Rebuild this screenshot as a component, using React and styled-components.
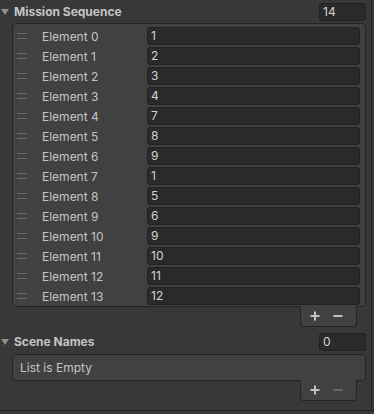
import React from 'react';
import styled, { createGlobalStyle } from 'styled-components';

const GlobalStyle = createGlobalStyle`
    html, body {
        margin: 0;
        padding: 0;
        background: #383838;
        font-family: Inter, "Noto Sans", "Liberation Sans", sans-serif;
        font-size: 12px;
        color: #c4c4c4;
    }
`;

const missionValues = [1, 2, 3, 4, 7, 8, 9, 1, 5, 6, 9, 10, 11, 12];

const Window = styled.div`
    width: 374px;
    height: 414px;
    display: flex;
    flex-direction: column;
    overflow: hidden;
`;

const Body = styled.div`
    display: flex;
    height: 410px;
    border-bottom: 1px solid #232323;
`;

const Inspector = styled.div`
    width: 371px;
    display: flex;
    flex-direction: column;
    padding-right: 5px;
    box-sizing: border-box;
`;

const ScrollStrip = styled.div`
    width: 2px;
    border-left: 1px solid #232323;
    background: #383838;
`;

const Header = styled.div`
    height: 23px;
    display: flex;
    align-items: center;
    margin-top: ${p => p.$top || 0}px;
`;

const Arrow = styled.span`
    width: 0;
    height: 0;
    margin-left: 1px;
    border-left: 4px solid transparent;
    border-right: 4px solid transparent;
    border-top: 6px solid #8f8f8f;
`;

const Title = styled.span`
    margin-left: 5px;
    font-weight: 700;
    font-size: 12px;
    color: #c4c4c4;
    flex: 1;
`;

const SizeField = styled.div`
    width: 47px;
    height: 18px;
    box-sizing: border-box;
    background: #2a2a2a;
    border: 1px solid #212121;
    border-radius: 3px;
    padding-left: 3px;
    line-height: 16px;
    color: #d2d2d2;
`;

const ListBox = styled.div`
    margin-left: 12px;
    margin-top: ${p => p.$top || 0}px;
    background: #414141;
    border: 1px solid #242424;
    border-radius: 4px;
    padding: 2px 0 0;
    box-sizing: border-box;
    min-height: ${p => p.$minHeight || 0}px;
`;

const Row = styled.div`
    height: 20px;
    display: flex;
    align-items: center;
`;

const Handle = styled.span`
    width: 10px;
    height: 4px;
    margin-left: 4px;
    border-top: 1px solid #6a6a6a;
    border-bottom: 1px solid #6a6a6a;
`;

const Label = styled.span`
    width: 105px;
    margin-left: 15px;
    color: #c4c4c4;
`;

const Field = styled.div`
    width: 213px;
    height: 18px;
    box-sizing: border-box;
    background: #2a2a2a;
    border: 1px solid #212121;
    border-radius: 3px;
    padding-left: 3px;
    line-height: 16px;
    color: #d2d2d2;
`;

const EmptyText = styled.div`
    padding: 2px 7px;
    line-height: 18px;
    color: #c4c4c4;
`;

const FooterRow = styled.div`
    display: flex;
    justify-content: flex-end;
    padding-right: 9px;
`;

const Footer = styled.div`
    width: 57px;
    height: 21px;
    box-sizing: border-box;
    margin-top: -1px;
    background: #414141;
    border: 1px solid #242424;
    border-top: none;
    border-radius: 0 0 4px 4px;
    display: flex;
    align-items: center;
    justify-content: space-around;
    padding: 0 6px 1px 2px;
`;

const Sign = styled.svg`
    width: 10px;
    height: 10px;
    display: block;
`;

function Plus() {
    return (
        <Sign viewBox="0 0 10 10">
            <rect x="0.5" y="4" width="9" height="2" fill="#c4c4c4" />
            <rect x="4" y="0.5" width="2" height="9" fill="#c4c4c4" />
        </Sign>
    );
}

function Minus({ disabled }) {
    return (
        <Sign viewBox="0 0 10 10">
            <rect x="0.5" y="4" width="9" height="2" fill={disabled ? '#6a6a6a' : '#c4c4c4'} />
        </Sign>
    );
}

export default function App() {
    return (
        <Window>
            <GlobalStyle />
            <Body>
                <Inspector>
                    <Header>
                        <Arrow />
                        <Title>Mission Sequence</Title>
                        <SizeField>14</SizeField>
                    </Header>
                    <ListBox>
                        {missionValues.map((v, i) => (
                            <Row key={i}>
                                <Handle />
                                <Label>Element {i}</Label>
                                <Field>{v}</Field>
                            </Row>
                        ))}
                    </ListBox>
                    <FooterRow>
                        <Footer>
                            <Plus />
                            <Minus />
                        </Footer>
                    </FooterRow>
                    <Header $top={3}>
                        <Arrow />
                        <Title>Scene Names</Title>
                        <SizeField>0</SizeField>
                    </Header>
                    <ListBox $top={1} $minHeight={27}>
                        <EmptyText>List is Empty</EmptyText>
                    </ListBox>
                    <FooterRow>
                        <Footer>
                            <Plus />
                            <Minus disabled />
                        </Footer>
                    </FooterRow>
                </Inspector>
                <ScrollStrip />
            </Body>
        </Window>
    );
}
